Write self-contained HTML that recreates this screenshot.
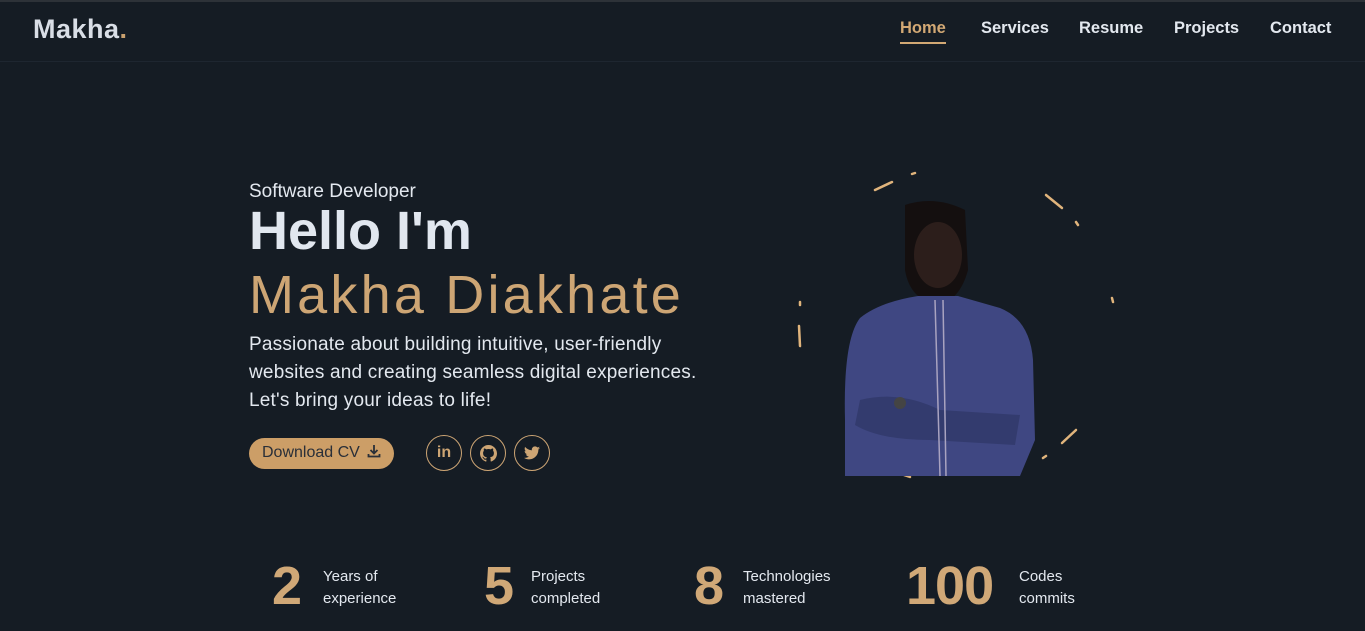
<!DOCTYPE html>
<html><head><meta charset="utf-8"><style>
*{margin:0;padding:0;box-sizing:border-box}
body{width:1365px;height:631px;overflow:hidden;background:#151c24;font-family:"Liberation Sans",sans-serif;color:#e3e8ef;position:relative}
.top{position:absolute;top:0;left:0;right:0;height:2px;background:#2d3238}
.hdr{position:absolute;top:2px;left:0;right:0;height:60px;border-bottom:1px solid #1e2630}
.logo{position:absolute;left:33px;top:12px;font-size:27px;font-weight:700;color:#d9dee6;letter-spacing:0.5px}
.logo span{color:#c8a06e}
.nav a{position:absolute;top:17px;font-size:16.5px;font-weight:700;color:#e3e8ef;text-decoration:none}
.nav a.act{color:#d2a874;border-bottom:2px solid #d2a874;padding-bottom:4px}
.abs{position:absolute;white-space:nowrap}
.acc{color:#cda574}
.btn{position:absolute;left:249px;top:438px;width:145px;height:31px;border-radius:16px;background:#cc9e67;color:#2a2f38;font-size:16px;padding:6px 0 0 13px}
.ic{position:absolute;top:435px;width:36px;height:36px;border:1.5px solid #cda574;border-radius:50%;display:flex;align-items:center;justify-content:center}
.num{position:absolute;top:555px;font-size:54px;font-weight:700;color:#d0a877}
.lbl{position:absolute;top:566px;font-size:15px;line-height:22px;color:#e3e8ef}
</style></head><body>
<div class="top"></div>
<div class="hdr">
<div class="logo">Makha<span>.</span></div>
<div class="nav">
<a class="act" style="left:900px">Home</a>
<a style="left:981px">Services</a>
<a style="left:1079px">Resume</a>
<a style="left:1174px">Projects</a>
<a style="left:1270px">Contact</a>
</div></div>

<div class="abs" style="left:249px;top:181px;font-size:19px">Software Developer</div>
<div class="abs" style="left:249px;top:200px;font-size:54px;font-weight:700;color:#e1e7ef">Hello I'm</div>
<div class="abs acc" style="left:249px;top:264px;font-size:54px;letter-spacing:3.2px">Makha Diakhate</div>
<div class="abs" style="left:249px;top:331px;font-size:19px;line-height:28px;letter-spacing:0.2px">Passionate about building intuitive, user-friendly<br>websites and creating seamless digital experiences.<br>Let's bring your ideas to life!</div>

<div class="btn">Download CV <svg width="14" height="14" viewBox="0 0 14 14" style="vertical-align:-1px;margin-left:3px"><path d="M7 1v8M3.5 6L7 9.5 10.5 6M1.5 10v2.5h11V10" stroke="#2a2f38" stroke-width="1.8" fill="none"/></svg></div>
<div class="ic" style="left:426px"><span style="color:#cda574;font-weight:700;font-size:16px">in</span></div>
<div class="ic" style="left:470px"><svg width="17" height="17" viewBox="0 0 16 16"><path fill="#cda574" d="M8 0C3.6 0 0 3.6 0 8c0 3.5 2.3 6.5 5.5 7.6.4.1.5-.2.5-.4v-1.4c-2.2.5-2.7-1-2.700-1-.4-.9-.9-1.2-.9-1.2-.7-.5.1-.5.1-.5.8.1 1.2.8 1.2.8.7 1.2 1.9.9 2.3.7.1-.5.3-.9.5-1.1-1.8-.2-3.600-.9-3.600-4 0-.9.3-1.6.8-2.1-.1-.2-.4-1 .1-2.1 0 0 .7-.2 2.2.8.6-.2 1.3-.3 2-.3s1.4.1 2 .3c1.5-1 2.2-.8 2.2-.8.4 1.1.2 1.9.1 2.1.5.6.8 1.3.8 2.1 0 3.1-1.9 3.7-3.600 3.9.3.3.5.8.5 1.5v2.2c0 .2.1.5.6.4C13.7 14.5 16 11.5 16 8c0-4.4-3.6-8-8-8z"/></svg></div>
<div class="ic" style="left:514px"><svg width="16" height="14" viewBox="0 0 24 20"><path fill="#cda574" d="M24 2.4c-.9.4-1.8.7-2.8.8 1-.6 1.8-1.6 2.2-2.7-1 .6-2 1-3.1 1.2C19.3.7 18 0 16.6 0c-2.7 0-4.9 2.2-4.9 4.9 0 .4 0 .8.1 1.1C7.7 5.800 4.1 3.9 1.7.9c-.4.7-.7 1.6-.7 2.5 0 1.7.9 3.2 2.2 4.1-.8 0-1.6-.2-2.2-.6v.1c0 2.4 1.7 4.4 3.9 4.8-.4.1-.8.2-1.3.2-.3 0-.6 0-.9-.1.6 2 2.4 3.4 4.6 3.4-1.7 1.3-3.8 2.100-6.1 2.100-.4 0-.8 0-1.2-.1 2.2 1.4 4.8 2.2 7.5 2.2 9.1 0 14-7.5 14-14v-.6c1-.7 1.8-1.6 2.5-2.5z"/></svg></div>

<svg class="abs" style="left:780px;top:160px" width="360" height="330" viewBox="780 160 360 330">
<g stroke="#e0b47c" stroke-width="2.5" stroke-linecap="round">
<line x1="875" y1="190" x2="892" y2="182"/><line x1="912" y1="174" x2="915" y2="173"/>
<line x1="1046" y1="195" x2="1062" y2="208"/><line x1="1076" y1="222" x2="1078" y2="225"/>
<line x1="1112" y1="298" x2="1113" y2="302"/><line x1="800" y1="302" x2="800" y2="305"/>
<line x1="799" y1="326" x2="800" y2="346"/><line x1="1062" y1="443" x2="1076" y2="430"/>
<line x1="1043" y1="458" x2="1046" y2="456"/><line x1="871" y1="458" x2="873" y2="460"/>
<line x1="892" y1="471" x2="910" y2="477"/>
</g>
<path d="M905 205 Q935 195 965 210 L968 270 Q960 300 938 305 Q910 300 905 270 Z" fill="#140f0f"/>
<ellipse cx="938" cy="255" rx="24" ry="33" fill="#2c1e1b"/>
<path d="M918 296 L958 296 L1000 308 Q1030 320 1033 360 L1035 440 L1020 476 L845 476 L845 420 Q843 340 860 318 Q880 302 918 296 Z" fill="#3f4782"/>
<path d="M860 400 Q900 390 940 410 L1020 415 L1015 445 L930 440 Q880 440 855 425 Z" fill="#333b6e"/>
<path d="M935 300 L940 476 M943 300 L946 476" stroke="#a9a3c0" stroke-width="1.5"/>
<circle cx="900" cy="403" r="6" fill="#444"/>
</svg>

<div class="num" style="left:272px">2</div><div class="lbl" style="left:323px">Years of<br>experience</div>
<div class="num" style="left:484px">5</div><div class="lbl" style="left:531px">Projects<br>completed</div>
<div class="num" style="left:694px">8</div><div class="lbl" style="left:743px">Technologies<br>mastered</div>
<div class="num" style="left:906px;letter-spacing:-1px">100</div><div class="lbl" style="left:1019px">Codes<br>commits</div>
</body></html>
